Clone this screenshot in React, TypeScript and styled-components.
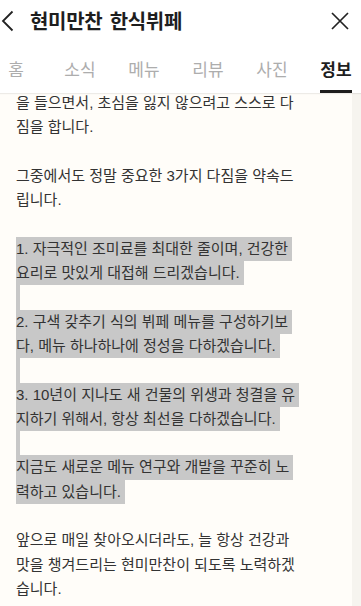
import React from "react";
import styled, { createGlobalStyle } from "styled-components";

const LINE = 24.3;

const GlobalStyle = createGlobalStyle`
  html, body {
    margin: 0;
    padding: 0;
    background: #ffffff;
  }
  * {
    box-sizing: border-box;
  }
`;

const Page = styled.div`
  width: 361px;
  height: 606px;
  overflow: hidden;
  display: flex;
  flex-direction: column;
  font-family: "Liberation Sans", "Noto Sans CJK KR", sans-serif;
  background: #ffffff;
`;

const Header = styled.header`
  height: 42px;
  display: flex;
  align-items: center;
  padding: 0 11px 0 1px;
  background: #ffffff;
  position: relative;
  z-index: 2;
`;

const IconButton = styled.button`
  border: none;
  background: none;
  padding: 0;
  margin: 0;
  display: flex;
  align-items: center;
  justify-content: center;
  color: #222;
  cursor: pointer;
`;

const Title = styled.h1`
  margin: 0 0 0 15px;
  flex: 1;
  font-family: "Noto Sans CJK KR", sans-serif;
  font-size: 20px;
  font-weight: 700;
  color: #1e1e1e;
  letter-spacing: -0.3px;
  word-spacing: 3px;
  line-height: 24px;
`;

const TabBar = styled.nav`
  height: 51px;
  background: #ffffff;
  overflow: hidden;
  box-shadow: 0 1px 1px rgba(0, 0, 0, 0.07);
  position: relative;
  z-index: 1;
`;

const TabList = styled.div`
  display: flex;
  height: 100%;
  margin-left: -16px;
`;

const Tab = styled.div`
  flex: 0 0 64px;
  display: flex;
  justify-content: center;
`;

const TabLabel = styled.span<{ $active?: boolean }>`
  display: flex;
  align-items: flex-start;
  padding-top: 16px;
  font-family: "Noto Sans CJK KR", sans-serif;
  font-size: 17px;
  line-height: 22px;
  font-weight: ${(p) => (p.$active ? 700 : 400)};
  color: ${(p) => (p.$active ? "#1e1e1e" : "#adadad")};
  border-bottom: 3px solid ${(p) => (p.$active ? "#1e1e1e" : "transparent")};
  height: 100%;
`;

const Content = styled.main`
  flex: 1;
  display: flex;
  overflow: hidden;
`;

const Article = styled.article`
  flex: 1;
  background: #fffdf9;
  padding: 0 16px;
  overflow: hidden;
`;

const ScrollTrack = styled.div`
  width: 9px;
  background: #f6f4ef;
`;

const Text = styled.div`
  margin-top: -2px;
  font-size: 15px;
  line-height: ${LINE}px;
  color: #333333;
`;

const Line = styled.div`
  height: ${LINE}px;
  white-space: nowrap;
`;

const Mark = styled.span`
  display: inline-block;
  background: #c8c8c8;
  padding-right: 4px;
`;

const Stub = styled.span`
  display: inline-block;
  width: 4px;
  height: ${LINE}px;
  vertical-align: top;
  background: #c8c8c8;
`;

type Row = { text: string; marked?: boolean };

const rows: Row[] = [
  { text: "을 들으면서, 초심을 잃지 않으려고 스스로 다" },
  { text: "짐을 합니다." },
  { text: "" },
  { text: "그중에서도 정말 중요한 3가지 다짐을 약속드" },
  { text: "립니다." },
  { text: "" },
  { text: "1. 자극적인 조미료를 최대한 줄이며, 건강한", marked: true },
  { text: "요리로 맛있게 대접해 드리겠습니다.", marked: true },
  { text: "", marked: true },
  { text: "2. 구색 갖추기 식의 뷔페 메뉴를 구성하기보", marked: true },
  { text: "다, 메뉴 하나하나에 정성을 다하겠습니다.", marked: true },
  { text: "", marked: true },
  { text: "3. 10년이 지나도 새 건물의 위생과 청결을 유", marked: true },
  { text: "지하기 위해서, 항상 최선을 다하겠습니다.", marked: true },
  { text: "", marked: true },
  { text: "지금도 새로운 메뉴 연구와 개발을 꾸준히 노", marked: true },
  { text: "력하고 있습니다.", marked: true },
  { text: "" },
  { text: "앞으로 매일 찾아오시더라도, 늘 항상 건강과" },
  { text: "맛을 챙겨드리는 현미만찬이 되도록 노력하겠" },
  { text: "습니다." },
];

const tabs = ["홈", "소식", "메뉴", "리뷰", "사진", "정보"];

const BackIcon = () => (
  <svg width="14" height="22" viewBox="0 0 14 22" fill="none">
    <path d="M11.5 1.5 L2 11 L11.5 20.5" stroke="#222" strokeWidth="1.8" />
  </svg>
);

const CloseIcon = () => (
  <svg width="20" height="20" viewBox="0 0 20 20" fill="none">
    <path d="M2 2 L18 18 M18 2 L2 18" stroke="#222" strokeWidth="1.7" />
  </svg>
);

export default function App() {
  return (
    <Page>
      <GlobalStyle />
      <Header>
        <IconButton aria-label="뒤로">
          <BackIcon />
        </IconButton>
        <Title>현미만찬 한식뷔페</Title>
        <IconButton aria-label="닫기">
          <CloseIcon />
        </IconButton>
      </Header>
      <TabBar>
        <TabList>
          {tabs.map((t) => (
            <Tab key={t}>
              <TabLabel $active={t === "정보"}>{t}</TabLabel>
            </Tab>
          ))}
        </TabList>
      </TabBar>
      <Content>
        <Article>
          <Text>
            {rows.map((r, i) => (
              <Line key={i}>
                {r.marked ? r.text ? <Mark>{r.text}</Mark> : <Stub /> : r.text}
              </Line>
            ))}
          </Text>
        </Article>
        <ScrollTrack />
      </Content>
    </Page>
  );
}
